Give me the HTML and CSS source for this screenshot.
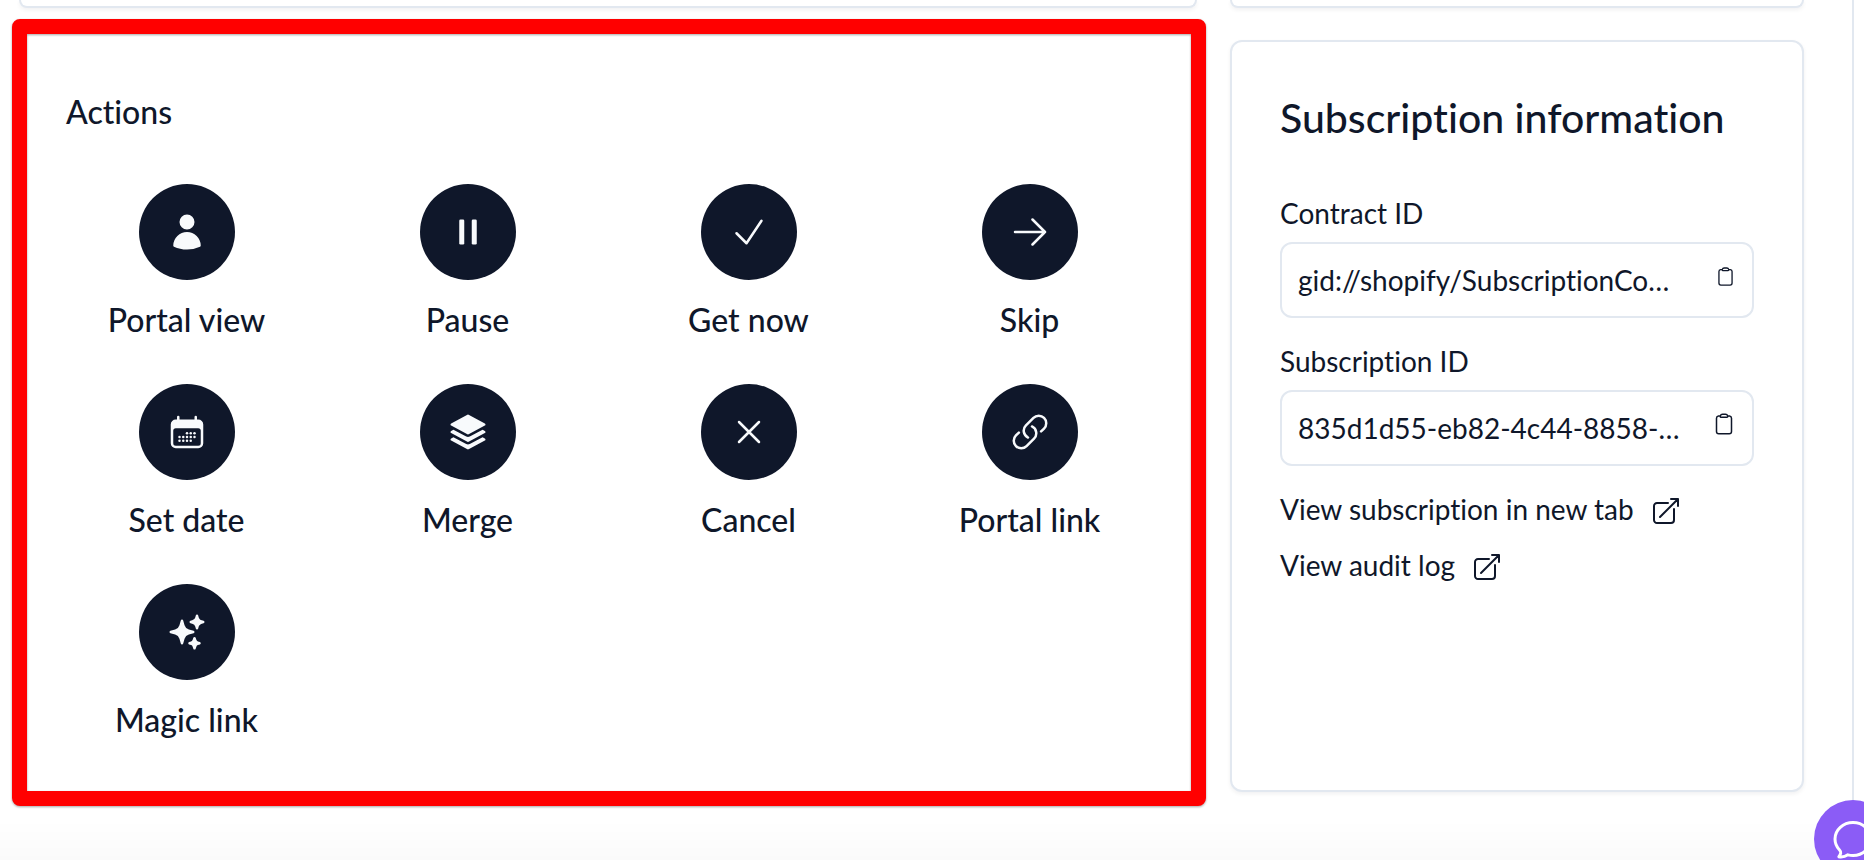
FILE: index.html
```html
<!DOCTYPE html>
<html lang="en">
<head>
<meta charset="utf-8">
<meta name="viewport" content="width=device-width, initial-scale=1">
<title>Subscription</title>
<link rel="stylesheet" href="styles.css">
</head>
<body>
<main class="page">
  <div class="grid">
    <div class="card card-end"></div>
    <div class="card card-end"></div>

    <section class="card actions">
      <h2 class="actions-title">Actions</h2>
      <div class="action-grid">
        <button class="action" type="button">
          <span class="disc"><svg class="icon solid" viewBox="0 0 24 24"><path d="M7.5 6a4.5 4.5 0 1 1 9 0 4.5 4.5 0 0 1-9 0zM3.751 20.105a8.25 8.25 0 0 1 16.498 0 .75.75 0 0 1-.437.695A18.683 18.683 0 0 1 12 22.5c-2.786 0-5.433-.608-7.812-1.7a.75.75 0 0 1-.437-.695z"/></svg></span>
          <span>Portal view</span>
        </button>
        <button class="action" type="button">
          <span class="disc"><svg class="icon solid" viewBox="0 0 24 24"><rect x="6.75" y="4.5" width="3" height="15" rx=".75"/><rect x="14.25" y="4.5" width="3" height="15" rx=".75"/></svg></span>
          <span>Pause</span>
        </button>
        <button class="action" type="button">
          <span class="disc"><svg class="icon line" viewBox="0 0 24 24"><path d="M4.5 12.75l6 6 9-13.5"/></svg></span>
          <span>Get now</span>
        </button>
        <button class="action" type="button">
          <span class="disc"><svg class="icon line" viewBox="0 0 24 24"><path d="M13.5 4.5L21 12m0 0l-7.5 7.5M21 12H3"/></svg></span>
          <span>Skip</span>
        </button>
        <button class="action" type="button">
          <span class="disc"><svg class="icon solid" viewBox="0 0 24 24"><path fill-rule="evenodd" d="M6.75 2.25A.75.75 0 0 1 7.5 3v1.5h9V3A.75.75 0 0 1 18 3v1.5h.75a3 3 0 0 1 3 3v11.25a3 3 0 0 1-3 3H5.25a3 3 0 0 1-3-3V7.5a3 3 0 0 1 3-3H6V3a.75.75 0 0 1 .75-.75zm13.5 9a1.5 1.5 0 0 0-1.5-1.5H5.25a1.5 1.5 0 0 0-1.5 1.5v7.5a1.5 1.5 0 0 0 1.5 1.5h13.5a1.5 1.5 0 0 0 1.5-1.5v-7.5z"/><circle cx="12" cy="12.75" r=".75"/><circle cx="14.25" cy="12.75" r=".75"/><circle cx="16.5" cy="12.75" r=".75"/><circle cx="7.5" cy="15" r=".75"/><circle cx="9.75" cy="15" r=".75"/><circle cx="12" cy="15" r=".75"/><circle cx="14.25" cy="15" r=".75"/><circle cx="16.5" cy="15" r=".75"/><circle cx="7.5" cy="17.25" r=".75"/><circle cx="9.75" cy="17.25" r=".75"/><circle cx="12" cy="17.25" r=".75"/><circle cx="14.25" cy="17.25" r=".75"/></svg></span>
          <span>Set date</span>
        </button>
        <button class="action" type="button">
          <span class="disc"><svg class="icon solid" viewBox="0 0 24 24"><path d="M11.644 1.59a.75.75 0 0 1 .712 0l9.75 5.25a.75.75 0 0 1 0 1.32l-9.75 5.25a.75.75 0 0 1-.712 0l-9.75-5.25a.75.75 0 0 1 0-1.32l9.75-5.25z"/><path d="M3.265 10.602l7.668 4.129a2.25 2.25 0 0 0 2.134 0l7.668-4.13 1.37.739a.75.75 0 0 1 0 1.32l-9.75 5.25a.75.75 0 0 1-.71 0l-9.75-5.25a.75.75 0 0 1 0-1.32l1.37-.738z"/><path d="M10.933 19.231l-7.668-4.13-1.37.739a.75.75 0 0 0 0 1.32l9.75 5.25c.221.12.489.12.71 0l9.75-5.25a.75.75 0 0 0 0-1.32l-1.37-.738-7.668 4.13a2.25 2.25 0 0 1-2.134-.001z"/></svg></span>
          <span>Merge</span>
        </button>
        <button class="action" type="button">
          <span class="disc"><svg class="icon line" viewBox="0 0 24 24"><path d="M6 18L18 6M6 6l12 12"/></svg></span>
          <span>Cancel</span>
        </button>
        <button class="action" type="button">
          <span class="disc"><svg class="icon line" viewBox="0 0 24 24"><path d="M13.19 8.688a4.5 4.5 0 0 1 1.242 7.244l-4.5 4.5a4.5 4.5 0 0 1-6.364-6.364l1.757-1.757m13.35-.622l1.757-1.757a4.5 4.5 0 0 0-6.364-6.364l-4.5 4.5a4.5 4.5 0 0 0 1.242 7.244"/></svg></span>
          <span>Portal link</span>
        </button>
        <button class="action" type="button">
          <span class="disc"><svg class="icon solid" viewBox="0 0 24 24"><path d="M9 4.5a.75.75 0 0 1 .721.544l.813 2.846a3.75 3.75 0 0 0 2.576 2.576l2.846.813a.75.75 0 0 1 0 1.442l-2.846.813a3.75 3.75 0 0 0-2.576 2.576l-.813 2.846a.75.75 0 0 1-1.442 0l-.813-2.846a3.75 3.75 0 0 0-2.576-2.576l-2.846-.813a.75.75 0 0 1 0-1.442l2.846-.813A3.75 3.75 0 0 0 7.466 7.89l.813-2.846A.75.75 0 0 1 9 4.5zM18 1.5a.75.75 0 0 1 .728.568l.258 1.036c.236.94.97 1.674 1.91 1.91l1.036.258a.75.75 0 0 1 0 1.456l-1.036.258c-.94.236-1.674.97-1.91 1.91l-.258 1.036a.75.75 0 0 1-1.456 0l-.258-1.036a2.625 2.625 0 0 0-1.91-1.91l-1.036-.258a.75.75 0 0 1 0-1.456l1.036-.258a2.625 2.625 0 0 0 1.91-1.91l.258-1.036A.75.75 0 0 1 18 1.5zM16.5 15a.75.75 0 0 1 .712.513l.394 1.183c.15.447.5.799.948.948l1.183.395a.75.75 0 0 1 0 1.422l-1.183.395c-.447.15-.799.5-.948.948l-.395 1.183a.75.75 0 0 1-1.422 0l-.395-1.183a1.5 1.5 0 0 0-.948-.948l-1.183-.395a.75.75 0 0 1 0-1.422l1.183-.395c.447-.15.799-.5.948-.948l.395-1.183A.75.75 0 0 1 16.5 15z"/></svg></span>
          <span>Magic link</span>
        </button>
      </div>
      <div class="highlight"></div>
    </section>

    <section class="card info">
      <h2 class="info-title">Subscription information</h2>
      <div class="info-list">
        <div class="field">
          <label for="contract-id">Contract ID</label>
          <div class="box">
            <input id="contract-id" type="text" readonly value="gid://shopify/SubscriptionCo…">
            <button class="copy" type="button" aria-label="Copy contract ID"><svg class="line copy-small" viewBox="0 0 24 24"><path d="M15.666 3.888A2.25 2.25 0 0 0 13.5 2.25h-3c-1.03 0-1.9.693-2.166 1.638m7.332 0c.055.194.084.4.084.612a.75.75 0 0 1-.75.75H9a.75.75 0 0 1-.75-.75c0-.212.03-.418.084-.612m7.332 0c.646.049 1.288.11 1.927.184 1.1.128 1.907 1.077 1.907 2.185V19.5a2.25 2.25 0 0 1-2.25 2.25H6.75A2.25 2.25 0 0 1 4.5 19.5V6.257c0-1.108.806-2.057 1.907-2.185a48.208 48.208 0 0 1 1.927-.184"/></svg></button>
          </div>
        </div>
        <div class="field">
          <label for="subscription-id">Subscription ID</label>
          <div class="box">
            <input id="subscription-id" type="text" readonly value="835d1d55-eb82-4c44-8858-…">
            <button class="copy" type="button" aria-label="Copy subscription ID"><svg class="line copy-large" viewBox="0 0 24 24"><path d="M15.666 3.888A2.25 2.25 0 0 0 13.5 2.25h-3c-1.03 0-1.9.693-2.166 1.638m7.332 0c.055.194.084.4.084.612a.75.75 0 0 1-.75.75H9a.75.75 0 0 1-.75-.75c0-.212.03-.418.084-.612m7.332 0c.646.049 1.288.11 1.927.184 1.1.128 1.907 1.077 1.907 2.185V19.5a2.25 2.25 0 0 1-2.25 2.25H6.75A2.25 2.25 0 0 1 4.5 19.5V6.257c0-1.108.806-2.057 1.907-2.185a48.208 48.208 0 0 1 1.927-.184"/></svg></button>
          </div>
        </div>
        <div class="links">
          <a class="link" href="#subscription">View subscription in new tab <svg class="line external" viewBox="0 0 24 24"><path d="M13.5 6H5.25A2.25 2.25 0 0 0 3 8.25v10.5A2.25 2.25 0 0 0 5.25 21h10.5A2.25 2.25 0 0 0 18 18.75V10.5m-10.5 6L21 3m0 0h-5.25M21 3v5.25"/></svg></a>
          <a class="link" href="#audit-log">View audit log <svg class="line external" viewBox="0 0 24 24"><path d="M13.5 6H5.25A2.25 2.25 0 0 0 3 8.25v10.5A2.25 2.25 0 0 0 5.25 21h10.5A2.25 2.25 0 0 0 18 18.75V10.5m-10.5 6L21 3m0 0h-5.25M21 3v5.25"/></svg></a>
        </div>
      </div>
    </section>
  </div>
</main>
<div class="fade"></div>
<button class="chat" type="button" aria-label="Open chat"><svg class="line chat-icon" viewBox="0 0 24 24"><path d="M12 20.25c4.97 0 9-3.694 9-8.25s-4.03-8.25-9-8.25S3 7.444 3 12c0 2.104.859 4.023 2.273 5.48.432.447.74 1.04.586 1.641a4.483 4.483 0 0 1-.923 1.785A5.969 5.969 0 0 0 6 21c1.282 0 2.47-.402 3.445-1.087.81.22 1.668.337 2.555.337z"/></svg></button>
</body>
</html>
```
FILE: styles.css
```css
* {
  box-sizing: border-box;
}

body {
  margin: 0;
  background: #fff;
  color: #0f172a;
  font-family: Lato, "Open Sans", sans-serif;
  font-size: 28px;
  font-weight: 400;
  line-height: 42px;
  font-variant-ligatures: none;
}

button,
input {
  margin: 0;
  padding: 0;
  border: 0;
  background: none;
  color: inherit;
  font: inherit;
  font-variant-ligatures: none;
}

button {
  cursor: pointer;
}

.page {
  min-height: 100vh;
  margin-right: 10px;
  padding: 0 48px 0 19px;
  border-right: 2px solid #e2e8f0;
}

.grid {
  display: grid;
  grid-template-columns: 1178fr 574fr;
  gap: 32px 33px;
}

.card {
  position: relative;
  min-width: 0;
  border: 2px solid #e2e8f0;
  border-radius: 12px;
  background: #fff;
  box-shadow: 0 2px 4px rgba(15, 23, 42, 0.06);
}

/* lower edge of the cards in the row above */
.card-end {
  height: 8px;
  border-top: 0;
  border-radius: 0 0 12px 12px;
}

.actions {
  padding: 46px 25px;
  border-color: transparent;
  box-shadow: none;
}

.actions-title {
  margin: 0 0 48px;
  padding-left: 20px;
  font-size: 32px;
  font-weight: 500;
  line-height: 48px;
}

.action-grid {
  display: grid;
  grid-template-columns: repeat(4, 1fr);
  row-gap: 40px;
}

.action {
  display: flex;
  flex-direction: column;
  align-items: center;
  gap: 16px;
  font-size: 32px;
  font-weight: 500;
  line-height: 48px;
}

.disc {
  display: grid;
  place-items: center;
  width: 96px;
  height: 96px;
  border-radius: 50%;
  background: #0f172a;
  color: #f8fafc;
}

.icon {
  width: 40px;
  height: 40px;
}

.solid {
  fill: currentColor;
}

.line {
  fill: none;
  stroke: currentColor;
  stroke-width: 1.5;
  stroke-linecap: round;
  stroke-linejoin: round;
}

.highlight {
  position: absolute;
  inset: -23px -11px -16px -9px;
  border: 15px solid #f00;
  border-radius: 8px;
  filter: drop-shadow(0 1px 1px rgba(0, 0, 0, 0.35));
  pointer-events: none;
}

.info {
  padding: 46px 48px;
}

.info-title {
  margin: 0 0 44px;
  font-size: 41px;
  font-weight: 500;
  line-height: 60px;
}

.info-list {
  display: flex;
  flex-direction: column;
  gap: 22px;
}

.field {
  display: flex;
  flex-direction: column;
  gap: 8px;
}

.box {
  display: flex;
  align-items: center;
  gap: 8px;
  height: 76px;
  padding: 0 16px;
  border: 2px solid #e2e8f0;
  border-radius: 12px;
}

.box input {
  flex: 1;
  min-width: 0;
  outline: 0;
}

.copy {
  display: flex;
  padding-bottom: 8px;
}

.copy-small {
  width: 21px;
  height: 21px;
}

.copy-large {
  width: 24px;
  height: 24px;
}

.links {
  display: flex;
  flex-direction: column;
  align-items: flex-start;
  gap: 14px;
}

.link {
  display: flex;
  align-items: center;
  gap: 16px;
  color: inherit;
  text-decoration: none;
}

.external {
  width: 32px;
  height: 32px;
  margin-top: 4px;
}

.fade {
  position: fixed;
  inset: auto 0 0 0;
  height: 40px;
  background: linear-gradient(rgba(0, 0, 0, 0), rgba(0, 0, 0, 0.02));
  pointer-events: none;
}

.chat {
  position: fixed;
  right: -28px;
  bottom: -18px;
  display: grid;
  place-items: center;
  width: 78px;
  height: 78px;
  border-radius: 50%;
  background: #8b5cf6;
  color: #fff;
}

.chat-icon {
  width: 48px;
  height: 48px;
}
```
